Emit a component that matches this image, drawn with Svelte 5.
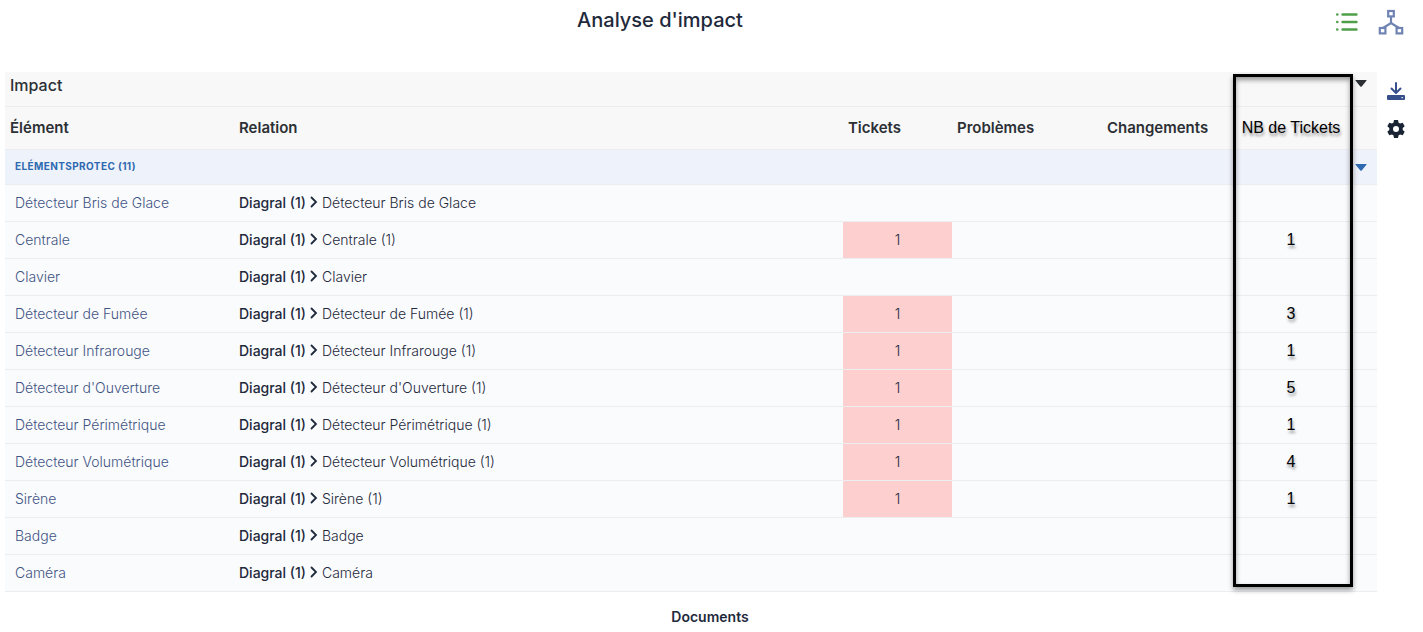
<script lang="ts">
  type Row = { name: string; linked: boolean; tickets?: number; total?: number };

  const root = 'Diagral (1)';

  const rows: Row[] = [
    { name: 'Détecteur Bris de Glace', linked: false },
    { name: 'Centrale', linked: true, tickets: 1, total: 1 },
    { name: 'Clavier', linked: false },
    { name: 'Détecteur de Fumée', linked: true, tickets: 1, total: 3 },
    { name: 'Détecteur Infrarouge', linked: true, tickets: 1, total: 1 },
    { name: "Détecteur d'Ouverture", linked: true, tickets: 1, total: 5 },
    { name: 'Détecteur Périmétrique', linked: true, tickets: 1, total: 1 },
    { name: 'Détecteur Volumétrique', linked: true, tickets: 1, total: 4 },
    { name: 'Sirène', linked: true, tickets: 1, total: 1 },
    { name: 'Badge', linked: false },
    { name: 'Caméra', linked: false },
  ];

  let impactOpen = $state(true);
  let groupOpen = $state(true);
</script>

<header>
  <h1>Analyse d'impact</h1>
  <div class="views">
    <button class="list" aria-label="Vue en liste">
      <svg width="22" height="20" viewBox="0 0 22 20">
        <g fill="none" stroke="currentColor" stroke-width="2.400" stroke-linecap="round">
          <path d="M1.200 2.500h.2M1.200 10h.2M1.200 17.500h.2M6.500 2.500h14M6.500 10h14M6.500 17.500h14" />
        </g>
      </svg>
    </button>
    <button class="graph" aria-label="Vue graphique">
      <svg width="26" height="26" viewBox="0 0 26 26">
        <g fill="none" stroke="currentColor" stroke-width="2.200">
          <rect x="10.200" y="2" width="5.600" height="5.400" />
          <rect x="1.800" y="19" width="5.600" height="5.400" />
          <rect x="18.600" y="19" width="5.600" height="5.400" />
          <path d="M13 7.500v6.500M5 19l8-5 8 5" />
        </g>
      </svg>
    </button>
  </div>
</header>

<main>
  <div class="impact">
    <table>
      <colgroup>
        <col class="c-element" />
        <col />
        <col class="c-tickets" />
        <col class="c-problems" />
        <col class="c-changes" />
        <col class="c-total" />
        <col class="c-toggle" />
      </colgroup>
      <thead>
        <tr class="caption">
          <th colspan="6">Impact</th>
          <th>
            <button class="toggle" aria-label="Impact" aria-expanded={impactOpen} onclick={() => (impactOpen = !impactOpen)}>
              <svg width="12" height="7" viewBox="0 0 12 7"><path d="M1 0h10q1 0 .4.800L6.700 6.500q-.7.700-1.400 0L.6.800Q0 0 1 0z" fill="currentColor" /></svg>
            </button>
          </th>
        </tr>
        {#if impactOpen}
          <tr class="columns">
            <th>Élément</th>
            <th class="relation">Relation</th>
            <th>Tickets</th>
            <th>Problèmes</th>
            <th>Changements</th>
            <th class="note">NB de Tickets</th>
            <th></th>
          </tr>
        {/if}
      </thead>
      {#if impactOpen}
        <tbody>
          <tr class="group">
            <th colspan="6">ELÉMENTSPROTEC (11)</th>
            <th>
              <button class="toggle" aria-label="Elémentsprotec" aria-expanded={groupOpen} onclick={() => (groupOpen = !groupOpen)}>
                <svg width="12" height="7" viewBox="0 0 12 7"><path d="M1 0h10q1 0 .4.800L6.700 6.500q-.7.700-1.400 0L.6.800Q0 0 1 0z" fill="currentColor" /></svg>
              </button>
            </th>
          </tr>
          {#if groupOpen}
            {#each rows as row}
              <tr>
                <td><a href="#element">{row.name}</a></td>
                <td>
                  <div class="path">
                    <b>{root}</b>
                    <svg width="8" height="12" viewBox="0 0 8 12"><path d="M1.500 1.500L6 6l-4.500 4.500" fill="none" stroke="currentColor" stroke-width="1.800" stroke-linecap="round" /></svg>
                    <span>{row.name}{row.linked ? ' (1)' : ''}</span>
                  </div>
                </td>
                <td class="count" class:hit={row.tickets}>{row.tickets ?? ''}</td>
                <td></td>
                <td></td>
                <td class="note">{row.total ?? ''}</td>
                <td></td>
              </tr>
            {/each}
          {/if}
        </tbody>
      {/if}
    </table>
    <div class="frame"></div>
  </div>

  <div class="tools">
    <button class="export" aria-label="Exporter">
      <svg width="18" height="18" viewBox="0 0 18 18">
        <path d="M9 1v9M4.500 6.500L9 11l4.500-4.500" fill="none" stroke="currentColor" stroke-width="2" stroke-linecap="round" stroke-linejoin="round" />
        <path fill="currentColor" fill-rule="evenodd" d="M1 13h16q1 0 1 1v3q0 1-1 1H1q-1 0-1-1v-3q0-1 1-1zM14.500 15v1.300h1.300V15z" />
      </svg>
    </button>
    <button class="settings" aria-label="Paramètres">
      <svg width="18" height="18" viewBox="0 0 18 18">
        <path
          fill="currentColor"
          fill-rule="evenodd"
          d="M7 0h4l.6 2.700 1.500.9 2.600-.9 2 3.500-2 1.900v1.800l2 1.900-2 3.500-2.600-.9-1.500.9L11 18H7l-.6-2.700-1.500-.9-2.600.9-2-3.500 2-1.900V8.100l-2-1.900 2-3.500 2.600.9 1.500-.9zM9 6a3 3 0 1 0 0 6 3 3 0 0 0 0-6z"
        />
      </svg>
    </button>
  </div>
</main>

<h2>Documents</h2>

<style>
  :global(body) {
    background: #fff;
    color: #1e293b;
    font-family: Inter, "Liberation Sans", sans-serif;
    font-size: 14px;
  }

  button {
    padding: 0;
    border: 0;
    background: none;
    color: inherit;
    cursor: pointer;
  }
  svg { display: block; }

  header {
    display: flex;
    align-items: flex-start;
    padding: 8px 19px 0 0;
    height: 64px;
    box-sizing: border-box;
  }
  h1 {
    flex: 1;
    margin: 0;
    font-size: 20px;
    line-height: 24px;
    font-weight: 500;
    text-align: center;
  }
  .views {
    display: flex;
    align-items: center;
    gap: 20px;
    padding: 1px 0 0 16px;
  }
  .list { color: #4f9f4a; }
  .graph { color: #6f83b3; }

  main {
    display: flex;
    gap: 10px;
    padding: 8px 18px 0 5px;
  }
  .impact {
    position: relative;
    flex: 1;
  }

  table {
    width: 100%;
    table-layout: fixed;
    border-collapse: separate;
    border-spacing: 0;
  }
  .c-element { width: 224px; }
  .c-tickets { width: 109px; }
  .c-problems { width: 150px; }
  .c-changes { width: 129px; }
  .c-total { width: 120px; }
  .c-toggle { width: 26px; }

  th, td {
    box-sizing: border-box;
    padding: 0 5px 2px;
    border-bottom: 1px solid #ebedf0;
    text-align: left;
    white-space: nowrap;
  }
  thead th {
    background: #f8f8f8;
    color: #2c3035;
    font-size: 15px;
    font-weight: 600;
    font-optical-sizing: none;
  }
  .caption th {
    height: 35px;
    padding-bottom: 8px;
    font-size: 16px;
    font-weight: 500;
  }
  .columns th { height: 43px; }
  thead th.relation { padding-left: 10px; }

  .group th {
    height: 35px;
    padding-left: 10px;
    background: #eef2fa;
    color: #2f69b0;
    font-size: 10px;
    font-weight: 700;
    letter-spacing: .04em;
  }
  .caption th:last-child, .group th:last-child { padding: 0 0 0 4px; }
  .caption th:last-child { padding-bottom: 12px; }
  .toggle { display: block; }

  td {
    height: 37px;
    padding: 0 10px 2px;
    background: #fafbfd;
    font-weight: 300;
  }
  td a {
    color: #3f5484;
    text-decoration: none;
  }
  .path {
    display: flex;
    align-items: center;
    gap: 4px;
  }
  .path b { font-weight: 500; }
  .count { text-align: center; }
  .count.hit { background: #fdcfcf; }

  .columns .note, td.note {
    padding: 0;
    color: #000;
    font-family: "Liberation Sans", Arial, sans-serif;
    font-size: 16px;
    font-weight: 400;
    text-align: center;
    text-shadow: 1px 3px 3px rgba(0, 0, 0, .4);
  }

  /* highlight drawn over the ticket total column */
  .frame {
    position: absolute;
    top: 2px;
    right: 24px;
    bottom: 5px;
    width: 120px;
    box-sizing: border-box;
    border: 3px solid #000;
    box-shadow: 0 3px 5px rgba(0, 0, 0, .4), inset 0 3px 5px rgba(0, 0, 0, .4);
    pointer-events: none;
  }

  .tools {
    display: flex;
    flex-direction: column;
    gap: 20px;
    padding-top: 10px;
  }
  .export { color: #36508c; }
  .settings { color: #182433; }

  h2 {
    margin: 15px 3px 0 0;
    font-size: 14px;
    line-height: 20px;
    font-weight: 600;
    text-align: center;
  }
</style>
